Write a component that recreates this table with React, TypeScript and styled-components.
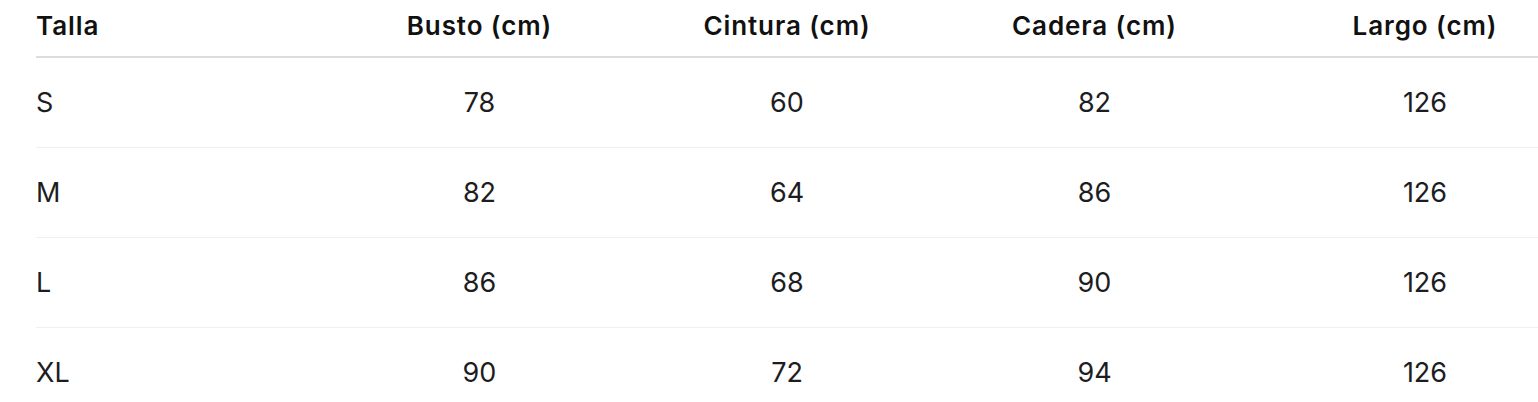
import { createGlobalStyle } from "styled-components";
import styled from "styled-components";

const rows = [
  { size: "S", busto: 78, cintura: 60, cadera: 82, largo: 126 },
  { size: "M", busto: 82, cintura: 64, cadera: 86, largo: 126 },
  { size: "L", busto: 86, cintura: 68, cadera: 90, largo: 126 },
  { size: "XL", busto: 90, cintura: 72, cadera: 94, largo: 126 },
];

export default function App() {
  return (
    <>
      <GlobalStyle />
      <Wrapper>
        <SizeTable>
          <HeaderRow>
            <HeadCell align="left">Talla</HeadCell>
            <HeadCell>Busto (cm)</HeadCell>
            <HeadCell>Cintura (cm)</HeadCell>
            <HeadCell>Cadera (cm)</HeadCell>
            <HeadCell>Largo (cm)</HeadCell>
          </HeaderRow>
          {rows.map((r) => (
            <BodyRow key={r.size}>
              <Cell align="left">{r.size}</Cell>
              <Cell>{r.busto}</Cell>
              <Cell>{r.cintura}</Cell>
              <Cell>{r.cadera}</Cell>
              <Cell>{r.largo}</Cell>
            </BodyRow>
          ))}
        </SizeTable>
      </Wrapper>
    </>
  );
}

const GlobalStyle = createGlobalStyle`
  html, body {
    margin: 0;
    background: #fff;
    overflow: hidden;
  }
  body {
    font-family: Inter, "Noto Sans", "Liberation Sans", sans-serif;
    color: #1d1d1f;
  }
`;

const Wrapper = styled.div`
  padding-left: 36px;
  width: 1620px;
`;

const SizeTable = styled.div`
  display: flex;
  flex-direction: column;
`;

const cols = "290px 307px 308px 307px 354px";

const HeaderRow = styled.div`
  display: grid;
  grid-template-columns: ${cols};
  height: 56px;
  border-bottom: 2px solid #dcdcdc;
`;

const BodyRow = styled.div`
  display: grid;
  grid-template-columns: ${cols};
  height: 89px;
  border-bottom: 1px solid #efefef;
  &:last-child {
    border-bottom: none;
  }
`;

const HeadCell = styled.div<{ align?: "left" | "center" }>`
  display: flex;
  align-items: center;
  justify-content: ${(p) => (p.align === "left" ? "flex-start" : "center")};
  padding-bottom: 5px;
  font-size: 26px;
  font-weight: 600;
  letter-spacing: 0.9px;
  color: #111;
`;

const Cell = styled.div<{ align?: "left" | "center" }>`
  display: flex;
  align-items: center;
  justify-content: ${(p) => (p.align === "left" ? "flex-start" : "center")};
  font-size: 27px;
  font-weight: 400;
  color: #1d1d1f;
`;
